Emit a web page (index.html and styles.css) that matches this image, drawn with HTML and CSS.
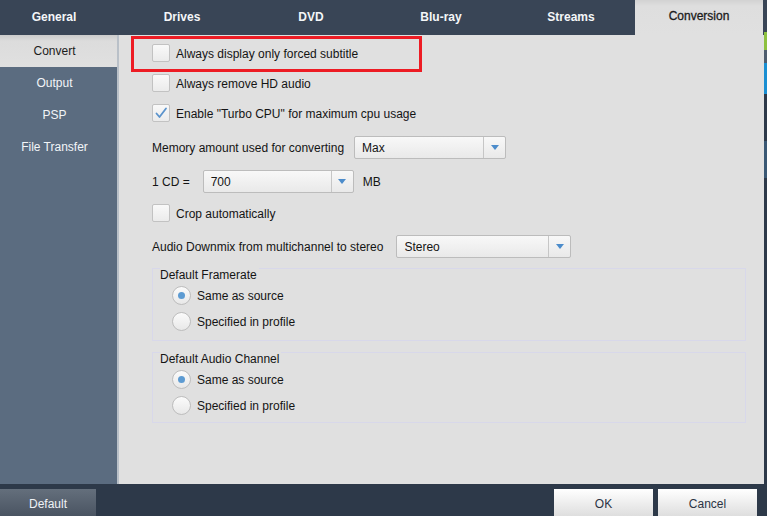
FILE: index.html
```html
<!DOCTYPE html>
<html lang="en">

<head>
    <meta charset="UTF-8" />
    <title>Settings - Conversion</title>
    <link rel="stylesheet" href="styles.css">
</head>

<body>
    <div class="window">
        <div class="app">
            <!-- Top tabs -->
            <div class="tabs">
                <div class="tab tab-first">General</div>
                <div class="tab tab-w130">Drives</div>
                <div class="tab">DVD</div>
                <div class="tab tab-w132">Blu-ray</div>
                <div class="tab">Streams</div>
                <div class="tab active">Conversion</div>
            </div>

            <div class="main">
                <!-- Left menu -->
                <div class="sidebar">
                    <div class="side-item active">Convert</div>
                    <div class="side-item">Output</div>
                    <div class="side-item">PSP</div>
                    <div class="side-item">File Transfer</div>
                </div>

                <!-- Conversion page -->
                <div class="content">
                    <div class="highlight"></div>

                    <label class="row">
                        <span class="check"></span><span class="txt">Always display only forced subtitle</span>
                    </label>
                    <label class="row">
                        <span class="check"></span><span class="txt">Always remove HD audio</span>
                    </label>
                    <label class="row">
                        <span class="check checked">
                            <svg width="16" height="16" viewBox="0 0 16 16">
                                <path d="M3.5 8.5 L6.5 12 L13 3.5" fill="none" stroke="#5b93cc" stroke-width="1.8" stroke-linecap="round" stroke-linejoin="round" />
                            </svg>
                        </span><span class="txt">Enable "Turbo CPU" for maximum cpu usage</span>
                    </label>

                    <div class="field first-field">
                        <span class="txt">Memory amount used for converting</span>
                        <div class="select select-mem">
                            <span class="select-value">Max</span>
                            <span class="select-arrow"><i></i></span>
                        </div>
                    </div>

                    <div class="field cd-field">
                        <span class="txt">1 CD =</span>
                        <div class="select select-cd">
                            <span class="select-value">700</span>
                            <span class="select-arrow"><i></i></span>
                        </div>
                        <span class="txt">MB</span>
                    </div>

                    <label class="row">
                        <span class="check"></span><span class="txt">Crop automatically</span>
                    </label>

                    <div class="field audio-field">
                        <span class="txt">Audio Downmix from multichannel to stereo</span>
                        <div class="select select-audio">
                            <span class="select-value">Stereo</span>
                            <span class="select-arrow"><i></i></span>
                        </div>
                    </div>

                    <div class="group">
                        <div class="group-title">Default Framerate</div>
                        <label class="radio-row"><span class="radio checked"></span><span class="txt">Same as source</span></label>
                        <label class="radio-row"><span class="radio"></span><span class="txt">Specified in profile</span></label>
                    </div>

                    <div class="group group-second">
                        <div class="group-title">Default Audio Channel</div>
                        <label class="radio-row"><span class="radio checked"></span><span class="txt">Same as source</span></label>
                        <label class="radio-row"><span class="radio"></span><span class="txt">Specified in profile</span></label>
                    </div>
                </div>
            </div>

            <!-- Bottom buttons -->
            <div class="footer">
                <button class="btn btn-default">Default</button>
                <div class="footer-right">
                    <button class="btn btn-light">OK</button>
                    <button class="btn btn-light">Cancel</button>
                </div>
            </div>
        </div>

        <div class="edge"></div>
    </div>
</body>

</html>
```

FILE: styles.css
```css
body {
    margin: 0;
    font-family: "Liberation Sans", Arial, sans-serif;
    font-size: 12px;
    color: #141414;
    background: #2d3949;
}

.window {
    display: flex;
    width: 767px;
    height: 516px;
    overflow: hidden;
}

.app {
    width: 764px;
    display: flex;
    flex-direction: column;
}

.edge {
    width: 3px;
    background: linear-gradient(to bottom,
        #394556 0, #394556 32px,
        #8dc13f 32px, #8dc13f 50px,
        #4f5d6e 50px, #4f5d6e 63px,
        #1a8fd2 63px, #1a8fd2 94px,
        #2d3949 94px, #2d3949 141px,
        #3a5874 141px, #3a5874 178px,
        #2d3949 178px);
}

/* tabs */
.tabs {
    height: 35px;
    display: flex;
    background: #394556;
}

.tab {
    width: 128px;
    line-height: 35px;
    text-align: center;
    font-weight: bold;
    color: #f4f6f8;
}

.tab-first {
    width: 108px;
    padding-right: 9px;
}

.tab-w130 {
    width: 130px;
}

.tab-w132 {
    width: 132px;
}

.tab.active {
    background: linear-gradient(to bottom, #d2d2d2, #dedede 6px, #e0e0e0);
    color: #1c1c1c;
    font-weight: normal;
    line-height: 33px;
    -webkit-text-stroke: 0.3px #1c1c1c;
}

/* main area */
.main {
    flex: 1;
    display: flex;
}

.sidebar {
    width: 117px;
    background: #5b6c80;
    border-right: 2px solid #b9c0c8;
}

.side-item {
    height: 32px;
    line-height: 33px;
    padding-right: 8px;
    text-align: center;
    color: #f2f5f8;
}

.side-item.active {
    background: linear-gradient(to bottom, #cbcbcb, #dcdcdc 6px, #e0e0e0);
    color: #1c1c1c;
}

.content {
    flex: 1;
    position: relative;
    background: #e0e0e0;
    padding: 3px 18px 0 33px;
}

.txt {
    padding-top: 2px;
}

.highlight {
    position: absolute;
    left: 12px;
    top: 1px;
    width: 291px;
    height: 36px;
    border: 3px solid #ed1c24;
    box-sizing: border-box;
}

.row {
    display: flex;
    align-items: center;
    height: 30px;
}

.check {
    width: 16px;
    height: 16px;
    border: 1px solid #c2c2c2;
    border-radius: 2px;
    background: linear-gradient(to bottom, #f9f9f9, #ebebeb);
    margin-right: 6px;
    display: flex;
    align-items: center;
    justify-content: center;
}

.field {
    display: flex;
    align-items: center;
    gap: 10px;
    height: 34px;
}

.first-field {
    margin-top: 2px;
}

.cd-field {
    gap: 0;
}

.cd-field .select {
    margin: 0 9px 0 13px;
}

.audio-field {
    margin-top: 1px;
    gap: 13px;
}

.select {
    height: 21px;
    display: flex;
    border: 1px solid #bcbcbc;
    border-radius: 2px;
    background: linear-gradient(to bottom, #f8f8f8, #e9e9e9);
}

.select-mem {
    width: 150px;
}

.select-cd {
    width: 149px;
}

.select-audio {
    width: 173px;
}

.select-value {
    flex: 1;
    padding: 1px 0 0 7px;
    line-height: 21px;
}

.select-arrow {
    width: 21px;
    border-left: 1px solid #c6c6c6;
    display: flex;
    align-items: center;
    justify-content: center;
}

.select-arrow i {
    width: 0;
    height: 0;
    border-left: 4px solid transparent;
    border-right: 4px solid transparent;
    border-top: 5px solid #4c8ccb;
}

/* radio groups */
.group {
    margin-top: 5px;
    border: 1px solid #d8d8ea;
    padding-bottom: 6px;
}

.group-second {
    margin-top: 11px;
    padding-bottom: 4px;
}

.group-title {
    width: max-content;
    margin: -1px 0 -1px 7px;
    padding-right: 2px;
    line-height: 15px;
    background: #e0e0e0;
}

.radio-row {
    display: flex;
    align-items: center;
    height: 26px;
    padding-left: 19px;
}

.radio {
    width: 17px;
    height: 17px;
    border: 1px solid #bdbdbd;
    border-radius: 50%;
    background: linear-gradient(to bottom, #fbfbfb, #e8e8e8);
    margin-right: 6px;
    display: flex;
    align-items: center;
    justify-content: center;
}

.radio.checked::after {
    content: "";
    width: 7px;
    height: 7px;
    border-radius: 50%;
    background: #5d9bd2;
}

/* footer */
.footer {
    height: 32px;
    background: #2d3949;
    display: flex;
    justify-content: space-between;
    align-items: flex-start;
    padding-top: 5px;
    box-sizing: border-box;
}

.footer-right {
    display: flex;
    gap: 5px;
    margin-right: 7px;
}

.btn {
    height: 27px;
    width: 99px;
    border: none;
    font-family: inherit;
    font-size: 12px;
    padding: 2px 0 0;
}

.btn-default {
    width: 96px;
    background: linear-gradient(to bottom, #646f7c, #4a5462);
    color: #eef2f6;
}

.btn-light {
    background: linear-gradient(to bottom, #ffffff, #dedede);
    color: #2b3444;
}
```
